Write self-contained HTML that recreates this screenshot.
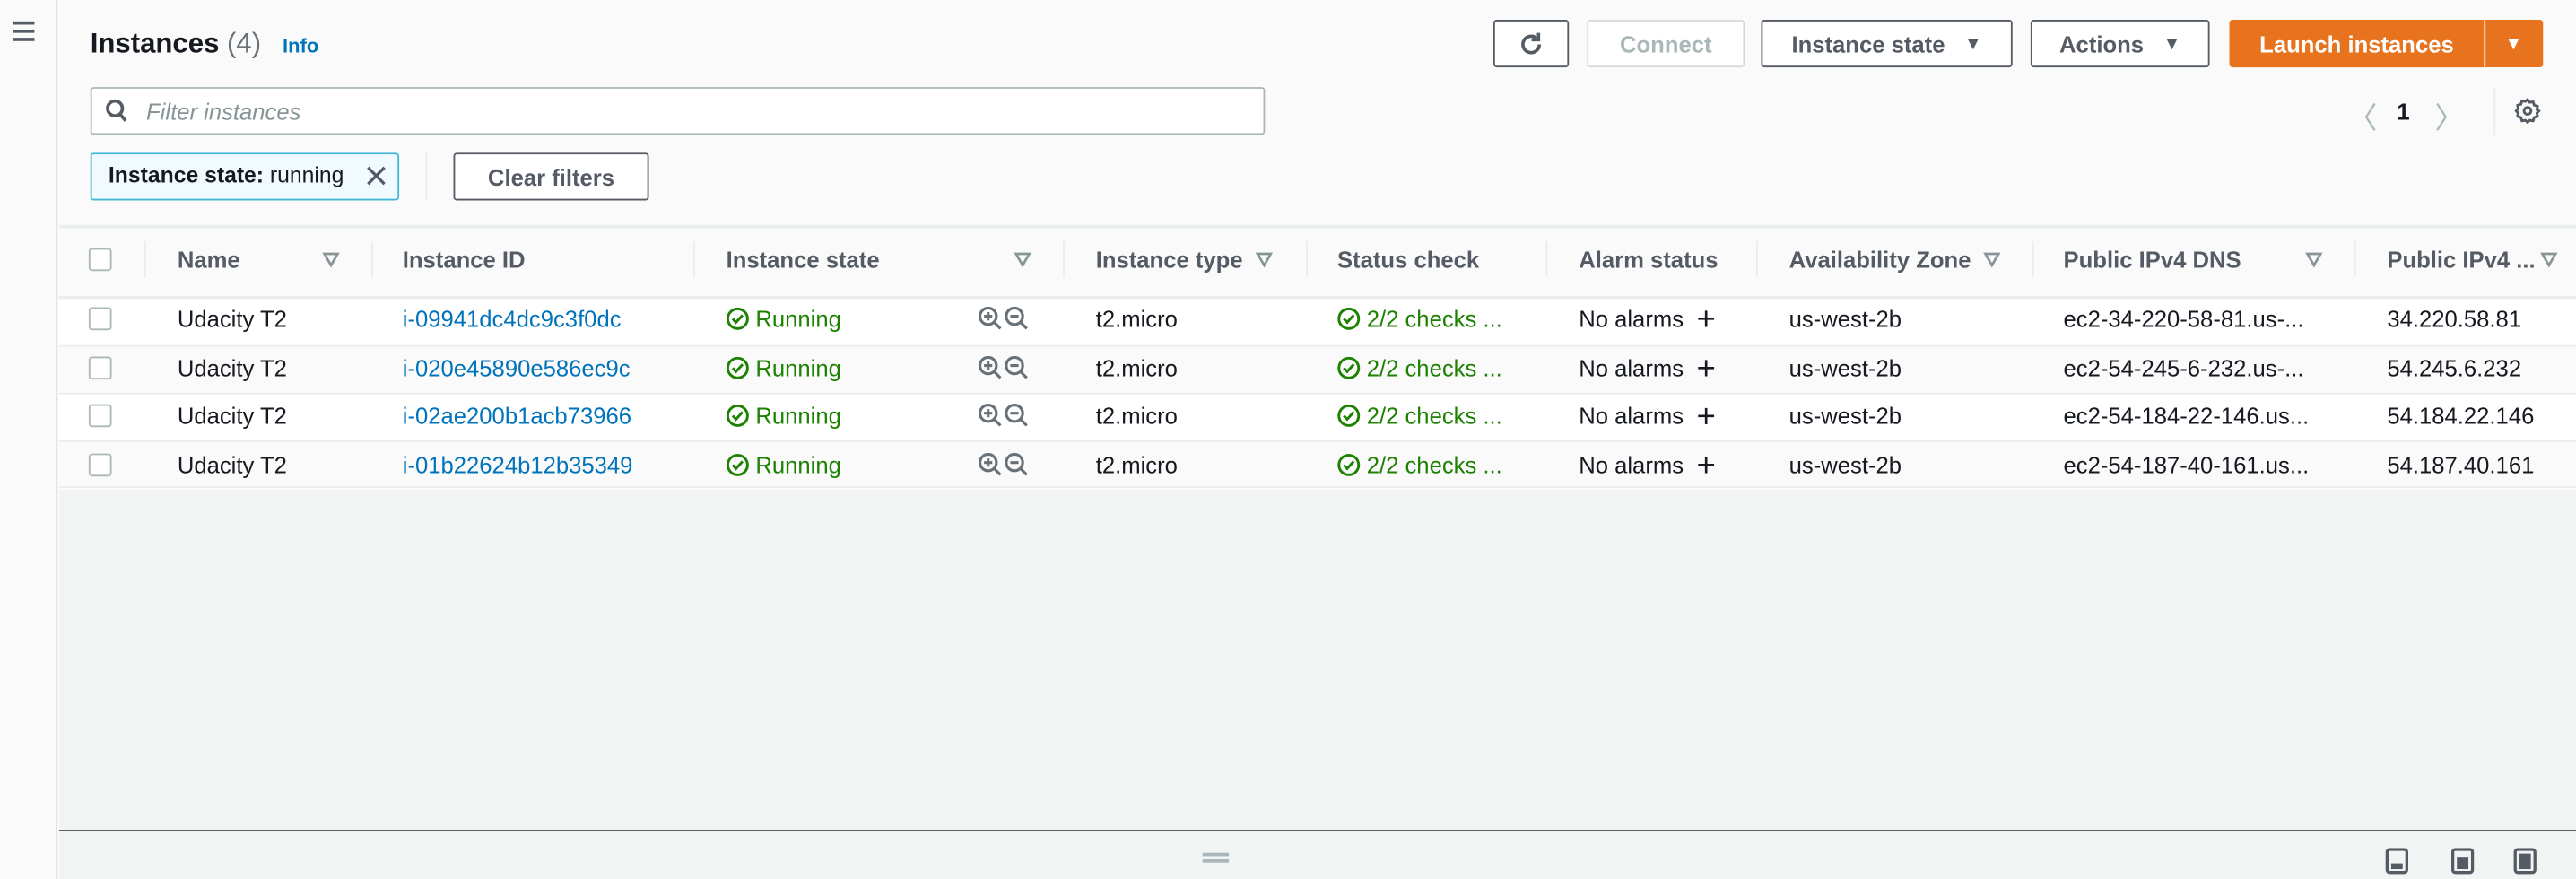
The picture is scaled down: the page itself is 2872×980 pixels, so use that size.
<!DOCTYPE html>
<html><head><meta charset="utf-8"><style>
*{box-sizing:border-box;margin:0;padding:0}
html,body{width:2872px;height:980px;overflow:hidden;background:#f2f3f3}
#w{position:absolute;left:0;top:0;width:1568px;height:535px;transform:scale(1.83163,1.83178);transform-origin:0 0;background:#fafafa;font-family:"Liberation Sans",sans-serif;font-size:14px;color:#16191f}
.a{position:absolute}
.btn{position:absolute;border:1px solid #545b64;border-radius:2px;background:#fff;font-weight:bold;color:#545b64;font-size:14px;display:flex;align-items:center;justify-content:center}
.hd{position:absolute;top:150px;font-weight:bold;color:#545b64;font-size:14px}
.dv{position:absolute;top:147px;width:1px;height:22px;background:#eaeded}
.tri{position:absolute;top:153px}
.row{position:absolute;left:36px;width:1532px;height:29.5px;border-top:1px solid #eaeded}
.cb{position:absolute;left:54px;width:14px;height:14px;border:1px solid #aab7b8;border-radius:2px;background:#fff}
.c{position:absolute;white-space:nowrap}
.lnk{color:#0073bb}
.grn{color:#1d8102}
</style></head><body><div id="w">
<div class="a" style="left:0;top:0;width:35px;height:535px;background:#fafafa;border-right:1px solid #d5dbdb"></div>
<div class="a" style="left:8px;top:13px;width:13px;height:2px;background:#545b64;box-shadow:0 5px 0 #545b64,0 10px 0 #545b64"></div>
<div class="a" style="left:55px;top:17px;font-size:17px;font-weight:bold">Instances <span style="font-weight:normal;color:#687078">(4)</span></div>
<div class="a lnk" style="left:172px;top:21px;font-size:12px;font-weight:bold">Info</div>
<div class="btn" style="left:909px;top:12px;width:46px;height:29px"><svg width="18" height="18" viewBox="0 0 18 18"><path d="M14 9a5 5 0 1 1-1.8-3.8" fill="none" stroke="#545b64" stroke-width="2"/><path d="M13.5 2v4.2H9.3" fill="none" stroke="#545b64" stroke-width="2"/></svg></div>
<div class="btn" style="left:966px;top:12px;width:96px;height:29px;border-color:#d5dbdb;color:#aab7b8">Connect</div>
<div class="btn" style="left:1072px;top:12px;width:153px;height:29px">Instance state&nbsp;&nbsp;&nbsp;<span style="font-size:11px">▼</span></div>
<div class="btn" style="left:1236px;top:12px;width:109px;height:29px">Actions&nbsp;&nbsp;&nbsp;<span style="font-size:11px">▼</span></div>
<div class="btn" style="left:1357px;top:12px;width:155px;height:29px;background:#e8731f;border-color:#e8731f;color:#fff;border-radius:2px 0 0 2px">Launch instances</div>
<div class="btn" style="left:1512px;top:12px;width:36px;height:29px;background:#e8731f;border-color:#e8731f;border-left:1px solid #fff;color:#fff;font-size:11px;border-radius:0 2px 2px 0">▼</div>
<div class="a" style="left:55px;top:53px;width:715px;height:29px;border:1px solid #aab7b8;border-radius:2px;background:#fff"></div>
<svg class="a" style="left:64px;top:60px" width="14" height="15" viewBox="0 0 14 15"><circle cx="6" cy="6" r="4.5" fill="none" stroke="#545b64" stroke-width="2"/><path d="M9 9.5l3.5 4" stroke="#545b64" stroke-width="2"/></svg>
<div class="a" style="left:89px;top:60px;font-style:italic;color:#879596">Filter instances</div>
<div class="a" style="left:1429px;top:58px;color:#aab7b8;font-size:18px">〈</div>
<div class="a" style="left:1459px;top:60px;font-weight:bold">1</div>
<div class="a" style="left:1482px;top:58px;color:#aab7b8;font-size:18px">〉</div>
<div class="a" style="left:1518px;top:53px;width:1px;height:29px;background:#eaeded"></div>
<svg class="a" style="left:1530px;top:59px" width="17" height="17" viewBox="0 0 16 16"><path d="M8 1.5l1.2 1.6 2-.3.6 1.9 1.9.6-.3 2L14.5 8l-1.1 1.2.3 2-1.9.6-.6 1.9-2-.3L8 14.5l-1.2-1.1-2 .3-.6-1.9-1.9-.6.3-2L1.5 8l1.1-1.2-.3-2 1.9-.6.6-1.9 2 .3z" fill="none" stroke="#545b64" stroke-width="1.5"/><circle cx="8" cy="8" r="2" fill="none" stroke="#545b64" stroke-width="1.5"/></svg>
<div class="a" style="left:55px;top:93px;width:188px;height:29px;border:1px solid #44b9d6;border-radius:2px;background:#f1faff"></div>
<div class="a" style="left:66px;top:99px;font-size:13.5px"><b>Instance state:</b> running</div>
<svg class="a" style="left:222px;top:100px" width="14" height="14" viewBox="0 0 14 14"><path d="M2 2l10 10M12 2L2 12" stroke="#545b64" stroke-width="1.8"/></svg>
<div class="a" style="left:259px;top:93px;width:1px;height:29px;background:#eaeded"></div>
<div class="btn" style="left:276px;top:93px;width:119px;height:29px">Clear filters</div>
<div class="a" style="left:36px;top:137px;width:1532px;height:160px;background:#fff;border-top:2px solid #eaeded"></div>
<div class="a" style="left:36px;top:139px;width:1532px;height:41px;background:#fafafa"></div>
<div class="cb" style="top:151px"></div>
<div class="dv" style="left:88px"></div><div class="dv" style="left:226px"></div><div class="dv" style="left:422px"></div><div class="dv" style="left:647px"></div><div class="dv" style="left:795px"></div><div class="dv" style="left:941px"></div><div class="dv" style="left:1069px"></div><div class="dv" style="left:1237px"></div><div class="dv" style="left:1433px"></div>
<div class="hd" style="left:108px">Name</div>
<div class="hd" style="left:245px">Instance ID</div>
<div class="hd" style="left:442px">Instance state</div>
<div class="hd" style="left:667px">Instance type</div>
<div class="hd" style="left:814px">Status check</div>
<div class="hd" style="left:961px">Alarm status</div>
<div class="hd" style="left:1089px">Availability Zone</div>
<div class="hd" style="left:1256px">Public IPv4 DNS</div>
<div class="hd" style="left:1453px">Public IPv4 ...</div>
<svg class="tri" style="left:196px" width="11" height="10" viewBox="0 0 11 10"><path d="M1.5 1.5h8L5.5 8.5z" fill="none" stroke="#879596" stroke-width="1.5"/></svg>
<svg class="tri" style="left:617px" width="11" height="10" viewBox="0 0 11 10"><path d="M1.5 1.5h8L5.5 8.5z" fill="none" stroke="#879596" stroke-width="1.5"/></svg>
<svg class="tri" style="left:764px" width="11" height="10" viewBox="0 0 11 10"><path d="M1.5 1.5h8L5.5 8.5z" fill="none" stroke="#879596" stroke-width="1.5"/></svg>
<svg class="tri" style="left:1207px" width="11" height="10" viewBox="0 0 11 10"><path d="M1.5 1.5h8L5.5 8.5z" fill="none" stroke="#879596" stroke-width="1.5"/></svg>
<svg class="tri" style="left:1403px" width="11" height="10" viewBox="0 0 11 10"><path d="M1.5 1.5h8L5.5 8.5z" fill="none" stroke="#879596" stroke-width="1.5"/></svg>
<svg class="tri" style="left:1546px" width="11" height="10" viewBox="0 0 11 10"><path d="M1.5 1.5h8L5.5 8.5z" fill="none" stroke="#879596" stroke-width="1.5"/></svg>
<div class="row" style="top:180px;background:#fff;border-top-width:2px"></div>
<div class="row" style="top:209.5px;background:#fafafa"></div>
<div class="row" style="top:239px;background:#fff"></div>
<div class="row" style="top:268px;background:#fafafa;height:29px;border-bottom:1px solid #eaeded"></div>
<div class="a" style="left:36px;top:298px;width:1532px;height:207px;background:#f2f3f3"></div>
<div class="a" style="left:36px;top:505px;width:1532px;height:30px;background:#f2f3f3;border-top:1.5px solid #545b64"></div>
<div class="a" style="left:732px;top:519px;width:16px;height:1.5px;background:#aab7b8;box-shadow:0 4px 0 #aab7b8"></div>
<svg class="a" style="left:1452px;top:516px" width="14" height="16" viewBox="0 0 14 16"><rect x="1" y="1" width="12" height="14" rx="1.5" fill="none" stroke="#545b64" stroke-width="1.8"/><rect x="3.5" y="9.5" width="7" height="3.5" fill="#545b64"/></svg>
<svg class="a" style="left:1492px;top:516px" width="14" height="16" viewBox="0 0 14 16"><rect x="1" y="1" width="12" height="14" rx="1.5" fill="none" stroke="#545b64" stroke-width="1.8"/><rect x="3.5" y="6" width="7" height="7" fill="#545b64"/></svg>
<svg class="a" style="left:1530px;top:516px" width="14" height="16" viewBox="0 0 14 16"><rect x="1" y="1" width="12" height="14" rx="1.5" fill="none" stroke="#545b64" stroke-width="1.8"/><rect x="3.5" y="3.5" width="7" height="9.5" fill="#545b64"/></svg>
<div class="a" style="left:0;top:186px;width:1568px;height:120px">
<div style="position:absolute;top:0;left:0;width:1568px;height:29.5px">
<div class="cb" style="top:1px"></div>
<div class="c" style="left:108px;top:0">Udacity T2</div>
<div class="c lnk" style="left:245px;top:0">i-09941dc4dc9c3f0dc</div>
<div class="c grn" style="left:442px;top:0"><svg width="14" height="14" viewBox="0 0 14 14" style="vertical-align:-2px"><circle cx="7" cy="7" r="6" fill="none" stroke="#1d8102" stroke-width="1.6"/><path d="M4 7l2 2.2L10 4.8" fill="none" stroke="#1d8102" stroke-width="1.6"/></svg> Running</div>
<svg class="a" style="left:595px;top:0" width="32" height="16" viewBox="0 0 32 16"><g fill="none" stroke="#687078" stroke-width="1.7"><circle cx="6.5" cy="6.5" r="5"/><path d="M10 10l4 4M4 6.5h5M6.5 4v5"/><circle cx="22.5" cy="6.5" r="5"/><path d="M26 10l4 4M20 6.5h5"/></g></svg>
<div class="c" style="left:667px;top:0">t2.micro</div>
<div class="c grn" style="left:814px;top:0"><svg width="14" height="14" viewBox="0 0 14 14" style="vertical-align:-2px"><circle cx="7" cy="7" r="6" fill="none" stroke="#1d8102" stroke-width="1.6"/><path d="M4 7l2 2.2L10 4.8" fill="none" stroke="#1d8102" stroke-width="1.6"/></svg> 2/2 checks ...</div>
<div class="c" style="left:961px;top:0">No alarms <span style="font-size:20px;line-height:14px;vertical-align:-2px;margin-left:4px">+</span></div>
<div class="c" style="left:1089px;top:0">us-west-2b</div>
<div class="c" style="left:1256px;top:0">ec2-34-220-58-81.us-...</div>
<div class="c" style="left:1453px;top:0">34.220.58.81</div>
</div>
<div style="position:absolute;top:29.5px;left:0;width:1568px;height:29.5px">
<div class="cb" style="top:1px"></div>
<div class="c" style="left:108px;top:0">Udacity T2</div>
<div class="c lnk" style="left:245px;top:0">i-020e45890e586ec9c</div>
<div class="c grn" style="left:442px;top:0"><svg width="14" height="14" viewBox="0 0 14 14" style="vertical-align:-2px"><circle cx="7" cy="7" r="6" fill="none" stroke="#1d8102" stroke-width="1.6"/><path d="M4 7l2 2.2L10 4.8" fill="none" stroke="#1d8102" stroke-width="1.6"/></svg> Running</div>
<svg class="a" style="left:595px;top:0" width="32" height="16" viewBox="0 0 32 16"><g fill="none" stroke="#687078" stroke-width="1.7"><circle cx="6.5" cy="6.5" r="5"/><path d="M10 10l4 4M4 6.5h5M6.5 4v5"/><circle cx="22.5" cy="6.5" r="5"/><path d="M26 10l4 4M20 6.5h5"/></g></svg>
<div class="c" style="left:667px;top:0">t2.micro</div>
<div class="c grn" style="left:814px;top:0"><svg width="14" height="14" viewBox="0 0 14 14" style="vertical-align:-2px"><circle cx="7" cy="7" r="6" fill="none" stroke="#1d8102" stroke-width="1.6"/><path d="M4 7l2 2.2L10 4.8" fill="none" stroke="#1d8102" stroke-width="1.6"/></svg> 2/2 checks ...</div>
<div class="c" style="left:961px;top:0">No alarms <span style="font-size:20px;line-height:14px;vertical-align:-2px;margin-left:4px">+</span></div>
<div class="c" style="left:1089px;top:0">us-west-2b</div>
<div class="c" style="left:1256px;top:0">ec2-54-245-6-232.us-...</div>
<div class="c" style="left:1453px;top:0">54.245.6.232</div>
</div>
<div style="position:absolute;top:59px;left:0;width:1568px;height:29.5px">
<div class="cb" style="top:1px"></div>
<div class="c" style="left:108px;top:0">Udacity T2</div>
<div class="c lnk" style="left:245px;top:0">i-02ae200b1acb73966</div>
<div class="c grn" style="left:442px;top:0"><svg width="14" height="14" viewBox="0 0 14 14" style="vertical-align:-2px"><circle cx="7" cy="7" r="6" fill="none" stroke="#1d8102" stroke-width="1.6"/><path d="M4 7l2 2.2L10 4.8" fill="none" stroke="#1d8102" stroke-width="1.6"/></svg> Running</div>
<svg class="a" style="left:595px;top:0" width="32" height="16" viewBox="0 0 32 16"><g fill="none" stroke="#687078" stroke-width="1.7"><circle cx="6.5" cy="6.5" r="5"/><path d="M10 10l4 4M4 6.5h5M6.5 4v5"/><circle cx="22.5" cy="6.5" r="5"/><path d="M26 10l4 4M20 6.5h5"/></g></svg>
<div class="c" style="left:667px;top:0">t2.micro</div>
<div class="c grn" style="left:814px;top:0"><svg width="14" height="14" viewBox="0 0 14 14" style="vertical-align:-2px"><circle cx="7" cy="7" r="6" fill="none" stroke="#1d8102" stroke-width="1.6"/><path d="M4 7l2 2.2L10 4.8" fill="none" stroke="#1d8102" stroke-width="1.6"/></svg> 2/2 checks ...</div>
<div class="c" style="left:961px;top:0">No alarms <span style="font-size:20px;line-height:14px;vertical-align:-2px;margin-left:4px">+</span></div>
<div class="c" style="left:1089px;top:0">us-west-2b</div>
<div class="c" style="left:1256px;top:0">ec2-54-184-22-146.us...</div>
<div class="c" style="left:1453px;top:0">54.184.22.146</div>
</div>
<div style="position:absolute;top:88.5px;left:0;width:1568px;height:29.5px">
<div class="cb" style="top:1px"></div>
<div class="c" style="left:108px;top:0">Udacity T2</div>
<div class="c lnk" style="left:245px;top:0">i-01b22624b12b35349</div>
<div class="c grn" style="left:442px;top:0"><svg width="14" height="14" viewBox="0 0 14 14" style="vertical-align:-2px"><circle cx="7" cy="7" r="6" fill="none" stroke="#1d8102" stroke-width="1.6"/><path d="M4 7l2 2.2L10 4.8" fill="none" stroke="#1d8102" stroke-width="1.6"/></svg> Running</div>
<svg class="a" style="left:595px;top:0" width="32" height="16" viewBox="0 0 32 16"><g fill="none" stroke="#687078" stroke-width="1.7"><circle cx="6.5" cy="6.5" r="5"/><path d="M10 10l4 4M4 6.5h5M6.5 4v5"/><circle cx="22.5" cy="6.5" r="5"/><path d="M26 10l4 4M20 6.5h5"/></g></svg>
<div class="c" style="left:667px;top:0">t2.micro</div>
<div class="c grn" style="left:814px;top:0"><svg width="14" height="14" viewBox="0 0 14 14" style="vertical-align:-2px"><circle cx="7" cy="7" r="6" fill="none" stroke="#1d8102" stroke-width="1.6"/><path d="M4 7l2 2.2L10 4.8" fill="none" stroke="#1d8102" stroke-width="1.6"/></svg> 2/2 checks ...</div>
<div class="c" style="left:961px;top:0">No alarms <span style="font-size:20px;line-height:14px;vertical-align:-2px;margin-left:4px">+</span></div>
<div class="c" style="left:1089px;top:0">us-west-2b</div>
<div class="c" style="left:1256px;top:0">ec2-54-187-40-161.us...</div>
<div class="c" style="left:1453px;top:0">54.187.40.161</div>
</div>
</div>
</div></body></html>
